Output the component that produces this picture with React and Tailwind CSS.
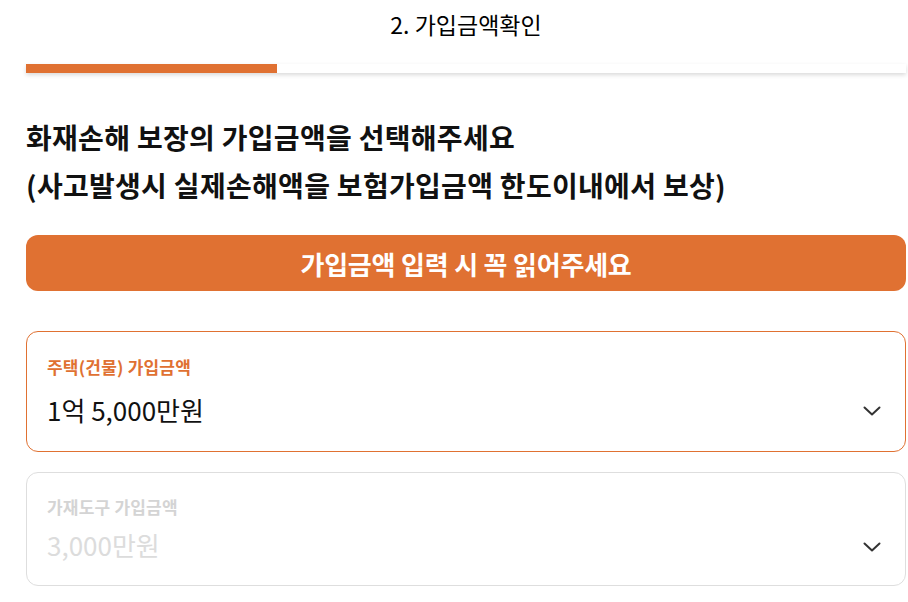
import React from "react";

const Chevron = ({ className }) => (
  <svg width="18" height="10" viewBox="0 0 18 10" fill="none" className={className}>
    <path d="M1.5 1.5l7.5 7 7.5-7" stroke="currentColor" strokeWidth="2" strokeLinecap="round" strokeLinejoin="round" />
  </svg>
);

export default function App() {
  return (
    <div
      className="w-[908px] h-[602px] bg-white overflow-hidden pl-[26px] pr-[2px]"
      style={{ fontFamily: '"Noto Sans CJK KR", "Noto Sans", sans-serif' }}
    >
      <div className="h-[48px] flex items-center justify-center text-[23px] text-black">
        2. 가입금액확인
      </div>
      <div className="mt-[16px] h-[9px] bg-white shadow-[0_2px_4px_rgba(0,0,0,0.15)] flex">
        <div className="w-[251px] h-full bg-[#e07132]" />
      </div>

      <h1 className="mt-[40px] text-[28px] font-bold text-[#111] leading-[48px] tracking-[0.3px]">
        화재손해 보장의 가입금액을 선택해주세요
        <br />
        (사고발생시 실제손해액을 보험가입금액 한도이내에서 보상)
      </h1>

      <button className="mt-[26px] w-full h-[56px] rounded-[12px] bg-[#e07132] text-white text-[26px] font-bold flex items-center justify-center tracking-[-0.2px]">
        가입금액 입력 시 꼭 읽어주세요
      </button>

      <div className="mt-[40px] h-[121px] rounded-[12px] border border-[#e07132] px-[20px] pt-[23px] relative">
        <div className="text-[17px] font-bold text-[#e07132] leading-[24px] tracking-[0.2px]">
          주택(건물) 가입금액
        </div>
        <div className="mt-[14px] text-[26px] text-[#111] leading-[34px]">
          1억 5,000만원
        </div>
        <Chevron className="absolute right-[24px] top-[74px] text-[#333]" />
      </div>

      <div className="mt-[20px] h-[114px] rounded-[12px] border border-[#dedede] px-[20px] pt-[22px] relative">
        <div className="text-[17px] font-bold text-[#d4d4d4] leading-[24px] tracking-[0.2px]">
          가재도구 가입금액
        </div>
        <div className="mt-[9px] text-[26px] text-[#dcdcdc] leading-[34px]">
          3,000만원
        </div>
        <Chevron className="absolute right-[24px] top-[69px] text-[#333]" />
      </div>
    </div>
  );
}
